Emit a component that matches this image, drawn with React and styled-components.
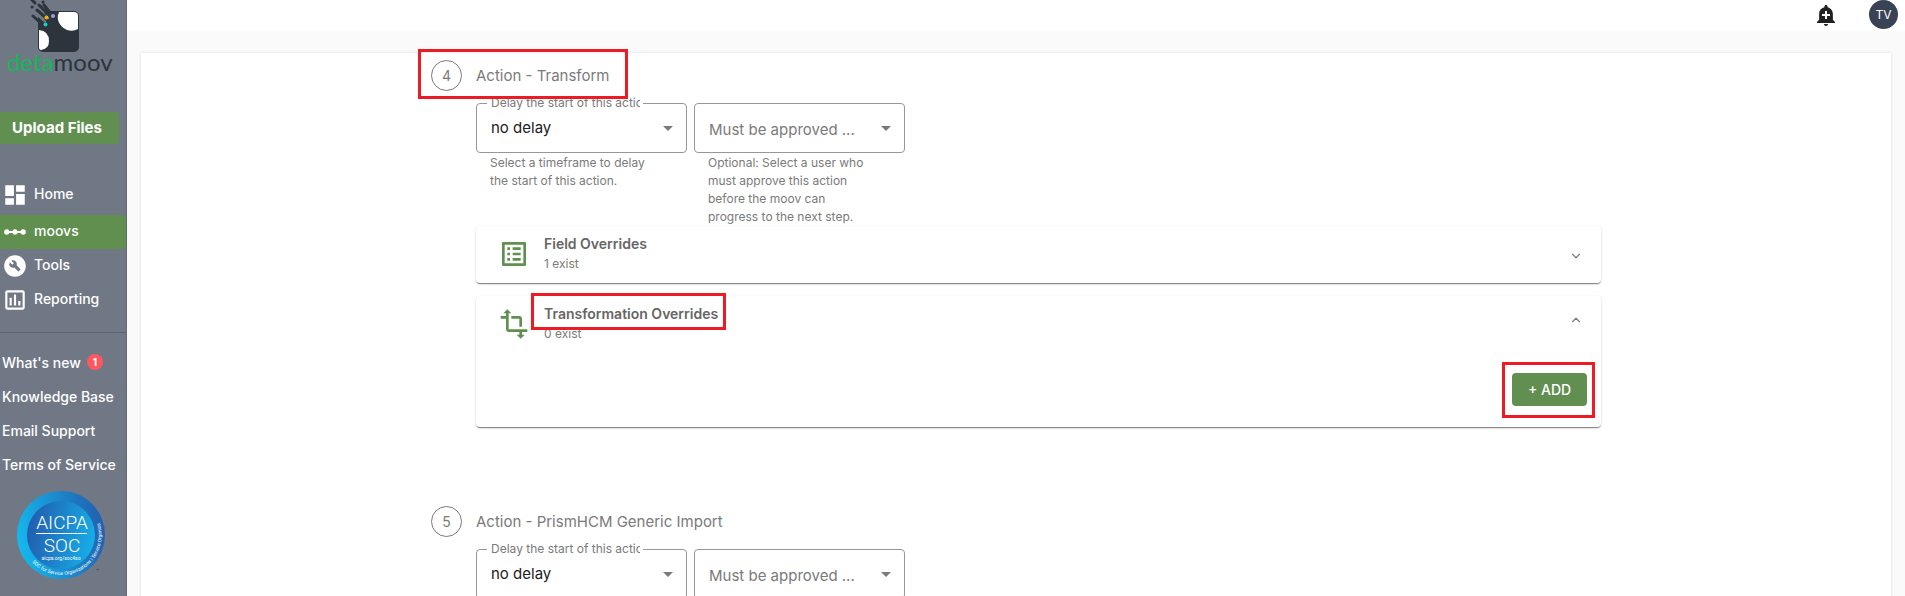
import { useState } from "react";
import styled, { createGlobalStyle, ThemeProvider } from "styled-components";
import {
  MdAddAlert,
  MdBuildCircle,
  MdDashboard,
  MdLinearScale,
  MdListAlt,
  MdOutlineAssessment,
  MdTransform,
} from "react-icons/md";
import { FiChevronDown, FiChevronUp } from "react-icons/fi";

const theme = {
  green: "#618f50",
  slate: "#707886",
  navy: "#3a4354",
  text: "#7a7a7a",
  dark: "#212121",
  border: "#979797",
  red: "#ed1c24",
  badge: "#ff5660",
};

const GlobalStyle = createGlobalStyle`
  * {
    box-sizing: border-box;
  }
  body {
    margin: 0;
    background: #fafafa;
    font-family: Inter, "Liberation Sans", sans-serif;
    font-size: 14px;
  }
  button, select {
    font-family: inherit;
  }
`;

const Layout = styled.div`
  display: flex;
  height: 100vh;
  overflow: hidden;
`;

/* sidebar */

const Sidebar = styled.aside`
  flex: 0 0 127px;
  background: ${(props) => props.theme.slate};
  border-right: 1px solid #626a78;
  color: #ffffff;
`;
const Brand = styled.a`
  display: block;
  height: 76px;
  color: #2b353b;
  text-decoration: none;
  & > svg {
    display: block;
    margin-left: 29px;
  }
`;
const BrandName = styled.span`
  display: block;
  padding-left: 7px;
  font-family: Lato, sans-serif;
  font-size: 24px;
  line-height: 18px;
  & > span {
    color: #12b855;
  }
`;
const UploadButton = styled.button`
  display: block;
  width: 119px;
  height: 32px;
  margin-top: 36px;
  padding: 0 5px 2px 0;
  border: none;
  border-radius: 0 4px 4px 0;
  background: ${(props) => props.theme.green};
  color: #ffffff;
  font-size: 15px;
  font-weight: 700;
`;
const Nav = styled.nav`
  margin-top: 34px;
  padding-bottom: 15px;
  border-bottom: 1px solid #5c6472;
`;
const NavItem = styled.a`
  display: flex;
  align-items: center;
  gap: 6px;
  height: 34px;
  padding-left: 2px;
  border-radius: 0 4px 4px 0;
  background: ${(props) => (props.$active ? props.theme.green : "none")};
  color: #ffffff;
  font-size: 14px;
  font-weight: 500;
  text-decoration: none;
  &:first-child {
    margin-bottom: 3px;
  }
`;
const NavText = styled.span`
  padding-bottom: 4px;
`;
const FooterLinks = styled.nav`
  padding-top: 12px;
`;
const FooterLink = styled.a`
  display: flex;
  align-items: center;
  gap: 6px;
  height: 34px;
  padding-left: 2px;
  color: #ffffff;
  font-size: 14px;
  font-weight: 500;
  white-space: nowrap;
  text-decoration: none;
`;
const Count = styled.span`
  width: 16px;
  height: 16px;
  border-radius: 50%;
  background: ${(props) => props.theme.badge};
  font-size: 10px;
  font-weight: 700;
  line-height: 16px;
  text-align: center;
`;
const SocLink = styled.a`
  display: block;
  margin: 10px 0 0 17px;
`;

/* page */

const Page = styled.div`
  flex: 1;
  min-width: 0;
  display: flex;
  flex-direction: column;
`;
const TopBar = styled.header`
  display: flex;
  justify-content: flex-end;
  align-items: flex-start;
  gap: 31px;
  flex: 0 0 31px;
  padding-right: 7px;
  background: #ffffff;
`;
const IconButton = styled.button`
  display: flex;
  height: 29px;
  align-items: center;
  padding: 0;
  border: none;
  background: none;
  color: ${(props) => props.theme.dark};
`;
const Avatar = styled.button`
  width: 29px;
  height: 29px;
  padding: 0;
  border: none;
  border-radius: 50%;
  background: ${(props) => props.theme.navy};
  color: #ffffff;
  font-size: 12px;
`;
const Main = styled.main`
  flex: 1;
  padding: 22px 14px 0;
`;
const Card = styled.section`
  padding: 7px 20px 0;
  background: #ffffff;
  box-shadow: 0 0 3px rgb(0 0 0 / 12%);
`;
const Steps = styled.div`
  max-width: 1170px;
  margin: 0 auto;
`;
const StepBlock = styled.article`
  padding-bottom: 79px;
`;
const StepHeader = styled.div`
  position: relative;
  z-index: 1;
  display: flex;
  align-items: center;
  gap: 14px;
  margin-bottom: 12px;
  color: ${(props) => props.theme.text};
`;
const StepNumber = styled.span`
  width: 31px;
  height: 31px;
  border: 1px solid ${(props) => props.theme.text};
  border-radius: 50%;
  font-size: 14px;
  line-height: 29px;
  text-align: center;
`;
const StepTitle = styled.h2`
  margin: 0;
  font-size: 15px;
  font-weight: 400;
`;
const StepBody = styled.div`
  padding-left: 45px;
`;
const Highlight = styled.span`
  position: absolute;
  top: -11px;
  left: ${(props) => props.$left}px;
  width: ${(props) => props.$width}px;
  height: ${(props) => props.$height}px;
  border: 3px solid ${(props) => props.theme.red};
  pointer-events: none;
`;

/* select fields */

const Fields = styled.div`
  display: flex;
  gap: 7px;
`;
const Field = styled.div`
  position: relative;
  width: 211px;
`;
const FieldLabel = styled.label`
  position: absolute;
  top: -9px;
  left: 11px;
  width: 156px;
  padding-left: 4px;
  border-right: 3px solid #ffffff;
  overflow: hidden;
  background: #ffffff;
  color: ${(props) => props.theme.text};
  font-size: 12px;
  line-height: 18px;
  white-space: nowrap;
`;
const Select = styled.select`
  display: block;
  appearance: none;
  width: 100%;
  height: 50px;
  padding: ${(props) => (props.$empty ? "2px 32px 0 14px" : "0 32px 2px 14px")};
  border: 1px solid ${(props) => props.theme.border};
  border-radius: 4px;
  background: #ffffff;
  color: ${(props) => (props.$empty ? props.theme.text : props.theme.dark)};
  font-size: 15px;
`;
const Arrow = styled.span`
  position: absolute;
  top: 23px;
  right: 14px;
  border: 5px solid transparent;
  border-top-color: ${(props) => props.theme.text};
  border-bottom: none;
  pointer-events: none;
`;
const Helper = styled.p`
  width: 165px;
  margin: 1px 0 0 14px;
  color: ${(props) => props.theme.text};
  font-size: 12px;
  line-height: 18px;
`;

/* override panels */

const Panels = styled.div`
  display: grid;
  gap: 13px;
`;
const Panel = styled.section`
  border-radius: 4px;
  background: #ffffff;
  box-shadow: 0 2px 1px -1px rgb(0 0 0 / 30%), 0 1px 1px rgb(0 0 0 / 20%),
    0 1px 3px rgb(0 0 0 / 14%);
`;
const PanelHeader = styled.button`
  display: flex;
  align-items: center;
  gap: 14px;
  width: 100%;
  padding: 8px 18px ${(props) => (props.$open ? 0 : 9)}px 22px;
  border: none;
  background: none;
  color: ${(props) => props.theme.green};
  text-align: left;
`;
const PanelText = styled.span`
  flex: 1;
  color: ${(props) => props.theme.text};
  font-size: 12px;
  line-height: 20px;
`;
const PanelTitle = styled.strong`
  display: block;
  position: relative;
  color: #666666;
  font-size: 14px;
  font-weight: 600;
`;
const Chevron = styled.span`
  display: flex;
  padding: ${(props) => (props.$open ? "0 0 8px" : "4px 0 0")};
  color: ${(props) => props.theme.text};
`;
const PanelActions = styled.div`
  display: flex;
  justify-content: flex-end;
  padding: 29px 14px 21px;
`;
const AddButton = styled.button`
  position: relative;
  width: 75px;
  height: 33px;
  padding: 0;
  border: none;
  border-radius: 4px;
  background: ${(props) => props.theme.green};
  color: #ffffff;
  font-size: 14px;
  font-weight: 500;
`;

function Logo() {
  return (
    <svg width="54" height="53" viewBox="29 0 54 53" aria-hidden="true">
      <rect x="38" y="11" width="41" height="41" rx="5" fill="#2b353b" />
      <path d="M37 10h12l4 5-8 8-8-7z" fill="#707886" />
      <g stroke="#2b353b" strokeWidth="3" strokeLinecap="round">
        <path d="M33 16l10 9M37 10l8 7M32 7h.1M32 0l3 3M39 5l9 9M43 2h.1M44 5l8 10M50 14l6 6M46 19l6 6M46 13l5 5" />
      </g>
      <path d="M59 12h15q4 0 4 4v13q-5 3-11 1-7-3-9-10-1-4 1-8z" fill="#fff" />
      <path d="M39 30q10 1 10 11 0 8-8 9-2 0-2-3z" fill="#fff" />
      <circle cx="46.500" cy="17.500" r="2" fill="#f4b400" />
      <circle cx="53" cy="16" r="2" fill="#979bf5" />
      <circle cx="45.500" cy="24.500" r="2" fill="#12d5c8" />
    </svg>
  );
}

function SocBadge() {
  return (
    <svg width="90" height="90" viewBox="0 0 90 90" role="img" aria-label="AICPA SOC">
      <defs>
        <linearGradient id="ring" x1="0" x2="1" y1=".6" y2=".4">
          <stop offset="0" stopColor="#14b9ee" />
          <stop offset="1" stopColor="#225fb0" />
        </linearGradient>
        <linearGradient id="disc" x1="0" x2="1" y1=".4" y2=".6">
          <stop offset="0" stopColor="#235cae" />
          <stop offset="1" stopColor="#16afe8" />
        </linearGradient>
        <path id="rim" d="M15 71A40 40 0 0 0 83 33" />
      </defs>
      <circle cx="44" cy="44" r="44" fill="url(#ring)" />
      <circle cx="44" cy="44" r="34" fill="url(#disc)" />
      <g fill="#fff" fontFamily="Roboto, sans-serif" textAnchor="middle">
        <text x="45" y="38" fontSize="19" fontWeight="300">AICPA</text>
        <path d="M19 42h51v1H19z" />
        <text x="45" y="61" fontSize="19" fontWeight="300">SOC</text>
        <text x="44" y="69" fontSize="5">aicpa.org/soc4so</text>
      </g>
      <text fill="#fff" fontFamily="Roboto, sans-serif" fontSize="5">
        <textPath href="#rim">SOC for Service Organizations | Service Organizations</textPath>
      </text>
      <text x="79" y="82" fontSize="5" fill="#2b353b">™</text>
    </svg>
  );
}

function StepFields({ id }) {
  return (
    <Fields>
      <Field>
        <Select id={`delay-${id}`} defaultValue="none">
          <option value="none">no delay</option>
        </Select>
        <FieldLabel htmlFor={`delay-${id}`}>Delay the start of this action</FieldLabel>
        <Arrow />
        <Helper>Select a timeframe to delay the start of this action.</Helper>
      </Field>
      <Field>
        <Select $empty aria-label="Must be approved by" defaultValue="">
          <option value="">Must be approved ...</option>
        </Select>
        <Arrow />
        <Helper>
          Optional: Select a user who must approve this action before the moov
          can progress to the next step.
        </Helper>
      </Field>
    </Fields>
  );
}

function OverridePanel({ icon: Icon, title, count, defaultOpen, highlighted, children }) {
  const [open, setOpen] = useState(Boolean(defaultOpen));

  return (
    <Panel>
      <PanelHeader $open={open} aria-expanded={open} onClick={() => setOpen(!open)}>
        <Icon size={32} />
        <PanelText>
          <PanelTitle>
            {title}
            {highlighted && <Highlight $left={-13} $width={195} $height={37} />}
          </PanelTitle>
          {count} exist
        </PanelText>
        <Chevron $open={open}>
          {open ? <FiChevronUp size={14} /> : <FiChevronDown size={14} />}
        </Chevron>
      </PanelHeader>
      {open && children}
    </Panel>
  );
}

function Step({ number, title, highlighted, children }) {
  return (
    <StepBlock>
      <StepHeader>
        <StepNumber>{number}</StepNumber>
        <StepTitle>{title}</StepTitle>
        {highlighted && <Highlight $left={-13} $width={210} $height={50} />}
      </StepHeader>
      <StepBody>
        <StepFields id={number} />
        <Panels>{children}</Panels>
      </StepBody>
    </StepBlock>
  );
}

export default function App() {
  return (
    <ThemeProvider theme={theme}>
      <GlobalStyle />
      <Layout>
        <Sidebar>
          <Brand href="#">
            <Logo />
            <BrandName>
              <span>deta</span>moov
            </BrandName>
          </Brand>
          <UploadButton>Upload Files</UploadButton>
          <Nav>
            <NavItem href="#home">
              <MdDashboard size={26} />
              <NavText>Home</NavText>
            </NavItem>
            <NavItem href="#moovs" $active>
              <MdLinearScale size={26} />
              <NavText>moovs</NavText>
            </NavItem>
            <NavItem href="#tools">
              <MdBuildCircle size={26} />
              <NavText>Tools</NavText>
            </NavItem>
            <NavItem href="#reporting">
              <MdOutlineAssessment size={26} />
              <NavText>Reporting</NavText>
            </NavItem>
          </Nav>
          <FooterLinks>
            <FooterLink href="#news">
              What's new <Count>1</Count>
            </FooterLink>
            <FooterLink href="#kb">Knowledge Base</FooterLink>
            <FooterLink href="#support">Email Support</FooterLink>
            <FooterLink href="#terms">Terms of Service</FooterLink>
          </FooterLinks>
          <SocLink href="#soc">
            <SocBadge />
          </SocLink>
        </Sidebar>

        <Page>
          <TopBar>
            <IconButton aria-label="Notifications">
              <MdAddAlert size={24} />
            </IconButton>
            <Avatar>TV</Avatar>
          </TopBar>
          <Main>
            <Card>
              <Steps>
                <Step number={4} title="Action - Transform" highlighted>
                  <OverridePanel icon={MdListAlt} title="Field Overrides" count={1} />
                  <OverridePanel
                    icon={MdTransform}
                    title="Transformation Overrides"
                    count={0}
                    defaultOpen
                    highlighted
                  >
                    <PanelActions>
                      <AddButton>
                        + ADD
                        <Highlight $left={-10} $width={93} $height={56} />
                      </AddButton>
                    </PanelActions>
                  </OverridePanel>
                </Step>
                <Step number={5} title="Action - PrismHCM Generic Import" />
              </Steps>
            </Card>
          </Main>
        </Page>
      </Layout>
    </ThemeProvider>
  );
}
